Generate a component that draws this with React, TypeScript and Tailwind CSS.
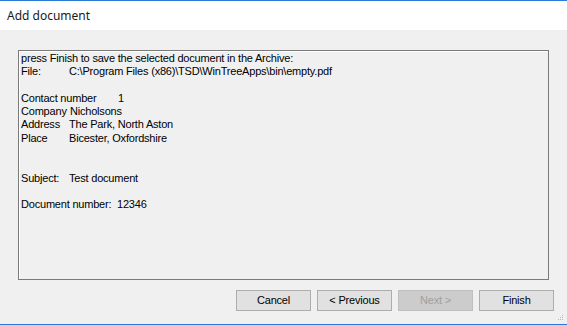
import React from 'react';

const lines: { label?: string; value?: string; tab?: number; text?: string }[] = [
  { text: 'press Finish to save the selected document in the Archive:' },
  { label: 'File:', value: 'C:\\Program Files (x86)\\TSD\\WinTreeApps\\bin\\empty.pdf', tab: 48 },
  {},
  { label: 'Contact number', value: '1', tab: 97 },
  { label: 'Company', value: 'Nicholsons', tab: 49 },
  { label: 'Address', value: 'The Park, North Aston', tab: 48 },
  { label: 'Place', value: 'Bicester, Oxfordshire', tab: 48 },
  {},
  {},
  { label: 'Subject:', value: 'Test document', tab: 48 },
  {},
  { label: 'Document number:', value: '12346', tab: 96 },
];

export default function App() {
  return (
    <div className="w-[567px] h-[325px] bg-[#f0f0f0] flex flex-col border-t border-b border-[#2b7bd6] font-['Liberation_Sans',Arial,sans-serif] text-black overflow-hidden">
      {/* title bar */}
      <div className="h-[29px] bg-white flex items-center pl-[7px] text-[12px] font-['Noto_Sans','Open_Sans',sans-serif] text-[#1a1a1a]">
        Add document
      </div>

      <div className="flex-1 flex flex-col px-[18px] pt-[20px] relative">
        {/* read-only multiline text box */}
        <div className="h-[230px] border border-[#7a7a7a] shadow-[inset_1px_1px_0_#ffffff] pl-[2px] pt-[1px] text-[11px] leading-[13.3px] tracking-[-0.2px]">
          {lines.map((l, i) =>
            l.text ? (
              <div key={i} className="h-[13.3px] whitespace-nowrap">{l.text}</div>
            ) : l.label ? (
              <div key={i} className="h-[13.3px] flex whitespace-nowrap">
                <span style={{ width: l.tab }} className="shrink-0">{l.label}</span>
                <span>{l.value}</span>
              </div>
            ) : (
              <div key={i} className="h-[13.3px]" />
            )
          )}
        </div>

        {/* wizard buttons */}
        <div className="flex justify-end gap-[6px] mt-[10px] mr-[-5px] text-[11px] tracking-[-0.2px]">
          <button className="w-[75px] h-[21px] bg-[#e1e1e1] border border-[#adadad]">Cancel</button>
          <button className="w-[75px] h-[21px] bg-[#e1e1e1] border border-[#adadad]">&lt; Previous</button>
          <button className="w-[75px] h-[21px] bg-[#cccccc] border border-[#bfbfbf] text-[#a0a0a0]" disabled>Next &gt;</button>
          <button className="w-[75px] h-[21px] bg-[#e1e1e1] border border-[#adadad]">Finish</button>
        </div>

        {/* size grip */}
        <svg className="absolute right-[3px] bottom-[3px]" width="6" height="6" viewBox="0 0 6 6">
          <rect x="4" y="0" width="1" height="1" fill="#b8b8b8" />
          <rect x="2" y="2" width="1" height="1" fill="#b8b8b8" />
          <rect x="4" y="2" width="1" height="1" fill="#b8b8b8" />
          <rect x="0" y="4" width="1" height="1" fill="#b8b8b8" />
          <rect x="2" y="4" width="1" height="1" fill="#b8b8b8" />
          <rect x="4" y="4" width="1" height="1" fill="#b8b8b8" />
        </svg>
      </div>
    </div>
  );
}
